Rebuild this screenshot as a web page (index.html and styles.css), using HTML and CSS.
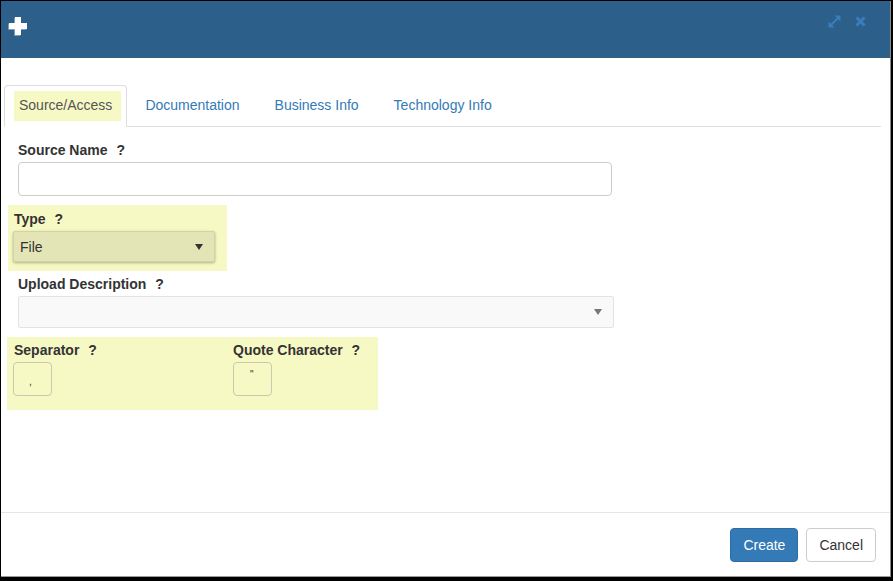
FILE: index.html
```html
<!DOCTYPE html>
<html>
<head>
<meta charset="utf-8">
<link rel="stylesheet" href="styles.css">
</head>
<body>
<div class="frame">
  <header class="hdr">
    <svg class="plus" width="20" height="20" viewBox="0 0 20 20">
      <path d="M7 1h6v6h6v6h-6v6h-6v-6h-6v-6h6z" fill="#9fb3c6" transform="translate(-0.7,0.7)"/>
      <path d="M7 1h6v6h6v6h-6v6h-6v-6h-6v-6h6z" fill="#ffffff"/>
    </svg>
    <div class="hdr-icons">
      <svg class="ico" width="13" height="13" viewBox="0 0 13 13">
        <path d="M3 10 L10 3" stroke="#3b7cbd" stroke-width="2.2"/>
        <path d="M6.5 0.5 H12.5 V6.5 Z" fill="#3b7cbd"/>
        <path d="M0.5 6.5 V12.5 H6.5 Z" fill="#3b7cbd"/>
      </svg>
      <svg class="ico" width="11" height="11" viewBox="0 0 11 11">
        <path d="M1.5 1.5 L9.5 9.5 M9.5 1.5 L1.5 9.5" stroke="#3b7cbd" stroke-width="3"/>
      </svg>
    </div>
  </header>

  <div class="tabs-wrap">
    <ul class="tabs">
      <li class="tab active"><a><span class="hl">Source/Access</span></a></li>
      <li class="tab"><a>Documentation</a></li>
      <li class="tab"><a>Business Info</a></li>
      <li class="tab"><a>Technology Info</a></li>
    </ul>
  </div>

  <main class="form">
    <label class="lbl lbl-first">Source Name <span class="q">?</span></label>
    <div class="text-input wide"></div>

    <div class="box box-type">
      <label class="lbl in-box">Type <span class="q">?</span></label>
      <div class="sel-type">
        <span>File</span>
        <span class="caret dark"></span>
      </div>
    </div>

    <label class="lbl lbl-upload">Upload Description <span class="q">?</span></label>
    <div class="sel-upload"><span class="caret grey"></span></div>

    <div class="box box-sep">
      <div class="col">
        <label class="lbl in-box">Separator <span class="q">?</span></label>
        <div class="small-input comma">,</div>
      </div>
      <div class="col">
        <label class="lbl">Quote Character <span class="q">?</span></label>
        <div class="small-input quote">"</div>
      </div>
    </div>
  </main>

  <footer class="ftr">
    <button class="btn btn-primary">Create</button>
    <button class="btn btn-default">Cancel</button>
  </footer>
</div>
</body>
</html>
```

FILE: styles.css
```css
html, body {
  margin: 0;
  padding: 0;
}
body {
  background: #000;
  width: 893px;
  height: 581px;
  overflow: hidden;
  font-family: "Liberation Sans", Arial, sans-serif;
  font-size: 14px;
  color: #333;
}
.frame {
  margin: 1px 0 0 1px;
  width: 889px;
  height: 575px;
  background: #fff;
  border-right: 1px solid #8a8a8a;
  border-bottom: 1px solid #9a9a9a;
  display: flex;
  flex-direction: column;
}
.hdr {
  height: 57px;
  flex: none;
  background: #2c5f8a;
  display: flex;
  align-items: flex-start;
  justify-content: space-between;
  padding: 0 24px 0 7px;
}
.plus {
  margin-top: 15px;
  display: block;
}
.hdr-icons {
  display: flex;
  align-items: center;
  gap: 14px;
  margin-top: 14px;
}
.ico {
  display: block;
}

.tabs-wrap {
  padding: 27px 9px 0 3px;
}
.tabs {
  list-style: none;
  margin: 0;
  padding: 0;
  display: flex;
  border-bottom: 1px solid #ddd;
}
.tab {
  margin-right: 2px;
  margin-bottom: -1px;
}
.tab a {
  display: block;
  padding: 9px 16px 11px 15px;
  line-height: 20px;
  border: 1px solid transparent;
  border-radius: 4px 4px 0 0;
  color: #337ab7;
}
.tab.active a {
  padding: 5px 5px 5px 9px;
  border-color: #ddd;
  border-bottom-color: #fff;
  background: #fff;
  color: #555;
}
.hl {
  display: block;
  background: #f7f9c5;
  padding: 4px 9px 6px 5px;
  line-height: 20px;
}

.form {
  flex: 1;
  padding: 0 0 0 17px;
  display: flex;
  flex-direction: column;
  align-items: flex-start;
}
.lbl {
  display: block;
  font-weight: bold;
  line-height: 20px;
  color: #333;
}
.lbl.in-box {
  padding-left: 1px;
}
.q {
  margin-left: 5px;
}
.lbl-first {
  margin-top: 13px;
}
.text-input {
  margin-top: 2px;
  height: 34px;
  box-sizing: border-box;
  border: 1px solid #ccc;
  border-radius: 4px;
}
.wide {
  width: 594px;
}
.box {
  background: #f7f9c5;
  box-sizing: border-box;
}
.box-type {
  margin-top: 9px;
  margin-left: -10px;
  width: 219px;
  padding: 4px 0 9px 5px;
}
.sel-type {
  margin-top: 2px;
  width: 202px;
  height: 31px;
  box-sizing: border-box;
  background: #e4e5b6;
  border: 1px solid #d3d4a6;
  border-radius: 2px;
  box-shadow: 0 1px 3px rgba(0, 0, 0, 0.3);
  display: flex;
  align-items: center;
  justify-content: space-between;
  padding: 0 11px 0 6px;
  color: #333;
}
.caret {
  width: 0;
  height: 0;
  border-left: 4px solid transparent;
  border-right: 4px solid transparent;
  border-top: 6px solid #333;
}
.caret.grey {
  border-top-color: #777;
}
.lbl-upload {
  margin-top: 3px;
}
.sel-upload {
  margin-top: 2px;
  width: 596px;
  height: 32px;
  box-sizing: border-box;
  background: #f9f9f9;
  border: 1px solid #e3e3e3;
  border-radius: 2px;
  display: flex;
  align-items: center;
  justify-content: flex-end;
  padding-right: 11px;
}
.box-sep {
  margin-top: 9px;
  margin-left: -11px;
  width: 371px;
  padding: 3px 0 14px 6px;
  display: grid;
  grid-template-columns: 220px 1fr;
}
.small-input {
  margin-top: 2px;
  width: 39px;
  height: 34px;
  box-sizing: border-box;
  border: 1px solid #c9c9b2;
  border-radius: 4px;
  font-size: 10px;
  color: #333;
}
.comma {
  padding: 13px 0 0 15px;
}
.quote {
  padding: 6px 0 0 16px;
}

.ftr {
  flex: none;
  border-top: 1px solid #e5e5e5;
  padding: 15px 14px 14px 0;
  display: flex;
  justify-content: flex-end;
  gap: 8px;
}
.btn {
  height: 34px;
  box-sizing: border-box;
  padding: 6px 12px;
  font-family: "Liberation Sans", Arial, sans-serif;
  font-size: 14px;
  line-height: 20px;
  border-radius: 4px;
  border: 1px solid #ccc;
  margin: 0;
}
.btn-primary {
  background: #337ab7;
  border-color: #2e6da4;
  color: #fff;
}
.btn-default {
  background: #fff;
  color: #333;
}
```
